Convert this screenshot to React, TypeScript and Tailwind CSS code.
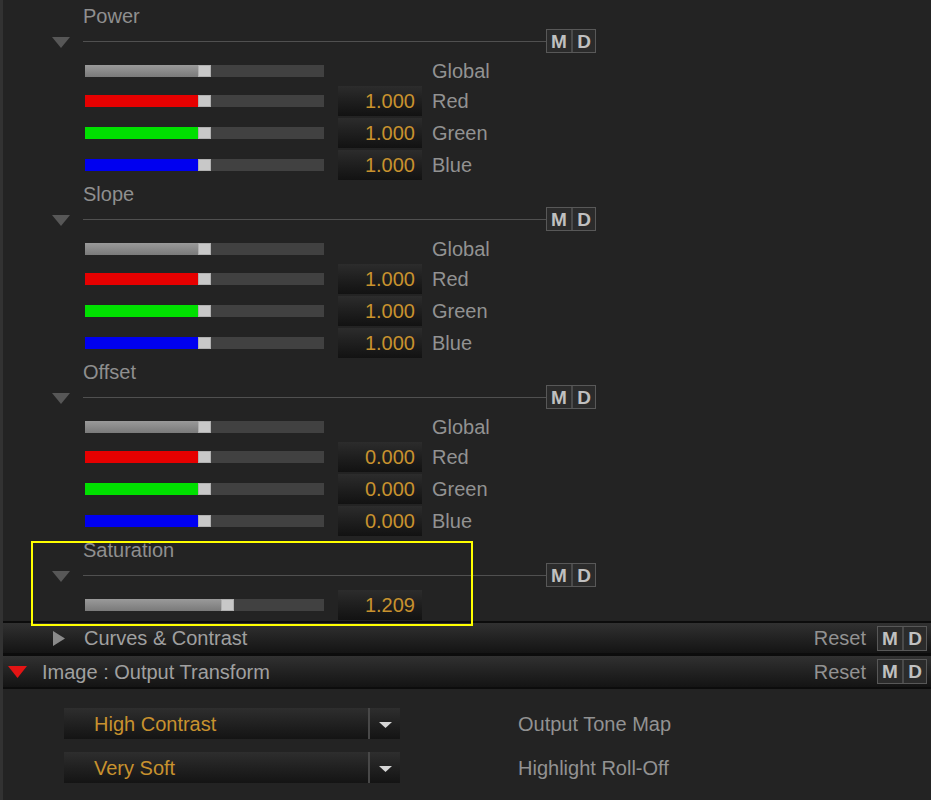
import React from "react";

type Channel = "global" | "red" | "green" | "blue";

const fillClass: Record<Channel, string> = {
  global: "bg-gradient-to-b from-[#9a9a9a] to-[#7a7a7a]",
  red: "bg-[#e60000]",
  green: "bg-[#00e000]",
  blue: "bg-[#0000f0]",
};

const labels: Record<Channel, string> = {
  global: "Global",
  red: "Red",
  green: "Green",
  blue: "Blue",
};

function DownTri({ className = "" }: { className?: string }) {
  return (
    <svg width="18" height="11" viewBox="0 0 18 11" className={className}>
      <polygon points="0,0 18,0 9,11" fill="#575757" />
    </svg>
  );
}

function MD({ h = "h-[24px]" }: { h?: string }) {
  return (
    <div className={`flex border border-[#585858] ${h}`}>
      <div className="w-[24px] flex items-center justify-center bg-[#2b2b2b] text-[#c0c0c0] font-bold text-[19px] leading-none">
        M
      </div>
      <div className="w-[24px] flex items-center justify-center bg-[#2b2b2b] text-[#c0c0c0] font-bold text-[19px] leading-none border-l-2 border-[#4a4a4a]">
        D
      </div>
    </div>
  );
}

function Slider({ channel, fill }: { channel: Channel; fill: number }) {
  return (
    <div className="relative w-[239px] h-[12px] bg-[#414141] flex">
      <div className={`h-full ${fillClass[channel]}`} style={{ width: fill }} />
      <div className="h-full w-[13px] bg-[#c8c8c8] border border-[#b0b0b0]" />
    </div>
  );
}

function ValueBox({ value }: { value: string }) {
  return (
    <div className="w-[84px] h-[30px] flex items-center justify-end pr-[7px] bg-gradient-to-b from-[#2c2c2c] to-[#121212] text-[#c8922e] text-[20px]">
      {value}
    </div>
  );
}

function SliderRow({
  channel,
  value,
  fill = 113,
  tall = true,
  label = true,
}: {
  channel: Channel;
  value?: string;
  fill?: number;
  tall?: boolean;
  label?: boolean;
}) {
  return (
    <div className={`flex items-center pl-[82px] ${tall ? "h-[32px]" : "h-[28px]"}`}>
      <Slider channel={channel} fill={fill} />
      <div className="ml-[14px] w-[84px]">{value && <ValueBox value={value} />}</div>
      {label && (
        <span className="ml-[10px] text-[20px] text-[#929292]">{labels[channel]}</span>
      )}
    </div>
  );
}

function Header({ title }: { title: string }) {
  return (
    <>
      <div className="h-[26px] flex items-center pl-[80px] text-[20px] text-[#8f8f8f]">
        {title}
      </div>
      <div className="h-[24px] flex items-center">
        <div className="w-[80px] pl-[49px] flex items-center pt-[3px]">
          <DownTri />
        </div>
        <div className="w-[463px] h-px bg-[#505050]" />
        <MD />
      </div>
    </>
  );
}

function RGBSection({ title, value }: { title: string; value: string }) {
  return (
    <div>
      <Header title={title} />
      <div className="mt-[4px]">
        <SliderRow channel="global" tall={false} />
        <SliderRow channel="red" value={value} />
        <SliderRow channel="green" value={value} />
        <SliderRow channel="blue" value={value} />
      </div>
    </div>
  );
}

function ResetMD() {
  return (
    <>
      <span className="ml-auto text-[20px] text-[#929292] mr-[11px]">Reset</span>
      <MD h="h-[25px]" />
    </>
  );
}

function Dropdown({ value }: { value: string }) {
  return (
    <div className="flex h-[31px] w-[336px] bg-gradient-to-b from-[#2e2e2e] to-[#141414]">
      <div className="w-[304px] flex items-center pl-[30px] text-[20px] text-[#c8922e]">
        {value}
      </div>
      <div className="w-[2px] bg-[#484848]" />
      <div className="flex-1 flex items-center justify-center pt-[2px]">
        <svg width="13" height="6" viewBox="0 0 13 6">
          <polygon points="0,0 13,0 6.5,6" fill="#d6d6d6" />
        </svg>
      </div>
    </div>
  );
}

export default function App() {
  return (
    <div className="relative w-[931px] h-[800px] overflow-hidden bg-[#232323] border-l-[3px] border-[#323232] font-['Liberation_Sans',Arial,sans-serif]">
      <div className="pt-[3px]">
        <RGBSection title="Power" value="1.000" />
        <RGBSection title="Slope" value="1.000" />
        <RGBSection title="Offset" value="0.000" />
        <div>
          <Header title="Saturation" />
          <div className="mt-[4px]">
            <SliderRow channel="global" tall={false} value="1.209" fill={136} label={false} />
          </div>
        </div>
      </div>

      <div className="mt-[2px] border-t-2 border-[#0c0c0c]">
        <div className="h-[30px] flex items-center bg-gradient-to-b from-[#313131] to-[#141414] pr-[4px]">
          <svg width="12" height="15" viewBox="0 0 12 15" className="ml-[50px]">
            <polygon points="0,0 12,7.5 0,15" fill="#8a8a8a" />
          </svg>
          <span className="ml-[19px] text-[20px] text-[#a0a0a0]">Curves &amp; Contrast</span>
          <ResetMD />
        </div>
        <div className="h-[3px] bg-[#0c0c0c]" />
        <div className="h-[31px] flex items-center bg-gradient-to-b from-[#313131] to-[#141414] pr-[4px]">
          <svg width="19" height="12" viewBox="0 0 19 12" className="ml-[5px]">
            <polygon points="0,0 19,0 9.5,12" fill="#e41414" />
          </svg>
          <span className="ml-[15px] text-[20px] text-[#a0a0a0]">Image : Output Transform</span>
          <ResetMD />
        </div>
        <div className="h-[2px] bg-[#0c0c0c]" />
      </div>

      <div className="pt-[19px] pl-[61px] flex flex-col gap-[13px]">
        <div className="flex items-center">
          <Dropdown value="High Contrast" />
          <span className="ml-[118px] text-[20px] text-[#929292]">Output Tone Map</span>
        </div>
        <div className="flex items-center">
          <Dropdown value="Very Soft" />
          <span className="ml-[118px] text-[20px] text-[#929292]">Highlight Roll-Off</span>
        </div>
      </div>

      <div className="absolute left-[28px] top-[541px] w-[442px] h-[85px] border-2 border-[#ffff00]" />
    </div>
  );
}
